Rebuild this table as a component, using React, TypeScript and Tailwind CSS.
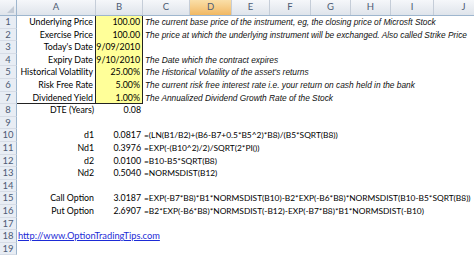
const COLS = [
  { k: 'C', w: 47 },
  { k: 'D', w: 42 },
  { k: 'E', w: 38 },
  { k: 'F', w: 41 },
  { k: 'G', w: 40 },
  { k: 'H', w: 40 },
  { k: 'I', w: 43 },
  { k: 'J', w: 60 },
]

type Row = {
  label?: string
  value?: string
  note?: string
  formula?: string
  input?: boolean
  link?: string
}

const ROWS: Row[] = [
  { label: 'Underlying Price', value: '100.00', note: 'The current base price of the instrument, eg, the closing price of Microsft Stock', input: true },
  { label: 'Exercise Price', value: '100.00', note: 'The price at which the underlying instrument will be exchanged. Also called Strike Price', input: true },
  { label: "Today's Date", value: '9/09/2010', input: true },
  { label: 'Expiry Date', value: '9/10/2010', note: 'The Date which the contract expires', input: true },
  { label: 'Historical Volatility', value: '25.00%', note: "The Historical Volatility of the asset's returns", input: true },
  { label: 'Risk Free Rate', value: '5.00%', note: 'The current risk free interest rate i.e. your return on cash held in the bank', input: true },
  { label: 'Dividened Yield', value: '1.00%', note: 'The Annualized Dividend Growth Rate of the Stock', input: true },
  { label: 'DTE (Years)', value: '0.08' },
  {},
  { label: 'd1', value: '0.0817', formula: '=(LN(B1/B2)+(B6-B7+0.5*B5^2)*B8)/(B5*SQRT(B8))' },
  { label: 'Nd1', value: '0.3976', formula: '=EXP(-(B10^2)/2)/SQRT(2*PI())' },
  { label: 'd2', value: '0.0100', formula: '=B10-B5*SQRT(B8)' },
  { label: 'Nd2', value: '0.5040', formula: '=NORMSDIST(B12)' },
  {},
  { label: 'Call Option', value: '3.0187', formula: '=EXP(-B7*B8)*B1*NORMSDIST(B10)-B2*EXP(-B6*B8)*NORMSDIST(B10-B5*SQRT(B8))' },
  { label: 'Put Option', value: '2.6907', formula: '=B2*EXP(-B6*B8)*NORMSDIST(-B12)-EXP(-B7*B8)*B1*NORMSDIST(-B10)' },
  {},
  { link: 'http://www.OptionTradingTips.com' },
  {},
]

const calibri = "font-['Lato','Noto_Sans',sans-serif]"

export default function App() {
  return (
    <div className="w-[474px] h-[255px] overflow-hidden bg-white text-black">
      {/* column headers */}
      <div className="flex h-[16px] border-b border-[#9eb6ce] bg-gradient-to-b from-[#f5f7fa] to-[#dfe4eb]">
        <div className="w-[17px] shrink-0 border-r border-[#9eb6ce] flex items-end justify-end p-[2px]">
          <div className="w-0 h-0 border-l-[7px] border-l-transparent border-b-[7px] border-b-[#c3cbd6]" />
        </div>
        <div className={`w-[79px] shrink-0 border-r border-[#c5cdd8] flex items-center justify-center text-[9.5px] text-[#4d5b74] ${calibri}`}>A</div>
        <div className={`w-[47px] shrink-0 border-r border-[#c5cdd8] flex items-center justify-center text-[9.5px] text-[#4d5b74] ${calibri}`}>B</div>
        {COLS.map((c) => (
          <div
            key={c.k}
            style={{ width: c.w }}
            className={`shrink-0 border-r border-[#c5cdd8] flex items-center justify-center text-[9.5px] text-[#4d5b74] ${calibri} ${
              c.k === 'D' ? 'bg-gradient-to-b from-[#fadfa8] to-[#f1b862]' : ''
            }`}
          >
            {c.k}
          </div>
        ))}
      </div>

      {ROWS.map((r, i) => (
        <div key={i} className="flex h-[12.6px] leading-[12.6px]">
          <div className={`w-[17px] shrink-0 bg-[#e8edf4] border-r border-[#9eb6ce] border-b border-b-[#d6dce6] text-center text-[9.5px] text-[#4d5b74] ${calibri}`}>
            {i + 1}
          </div>
          {r.link ? (
            <div className={`pl-[1px] whitespace-nowrap text-[9.3px] text-[#1d2bd6] underline ${calibri}`}>{r.link}</div>
          ) : (
            <>
              <div
                className={`w-[79px] shrink-0 pr-[2px] text-right whitespace-nowrap text-[8.8px] ${calibri} ${
                  r.input ? 'border-r border-[#222]' : ''
                } ${i === 6 ? 'border-b border-[#222]' : ''}`}
              >
                {r.label}
              </div>
              <div
                className={`w-[47px] shrink-0 pr-[2px] text-right whitespace-nowrap text-[8.8px] ${calibri} ${
                  r.input ? 'bg-[#ffff99] border-r border-[#222]' : ''
                } ${i === 6 ? 'border-b border-[#222]' : ''}`}
              >
                {r.value}
              </div>
              {r.note && (
                <div className="pl-[2px] whitespace-nowrap italic text-[8.35px] font-['Liberation_Sans',Arial,sans-serif] text-[#111]">
                  {r.note}
                </div>
              )}
              {r.formula && (
                <div className={`pl-[1px] whitespace-nowrap text-[8.4px] ${calibri}`}>{r.formula}</div>
              )}
            </>
          )}
        </div>
      ))}
    </div>
  )
}
